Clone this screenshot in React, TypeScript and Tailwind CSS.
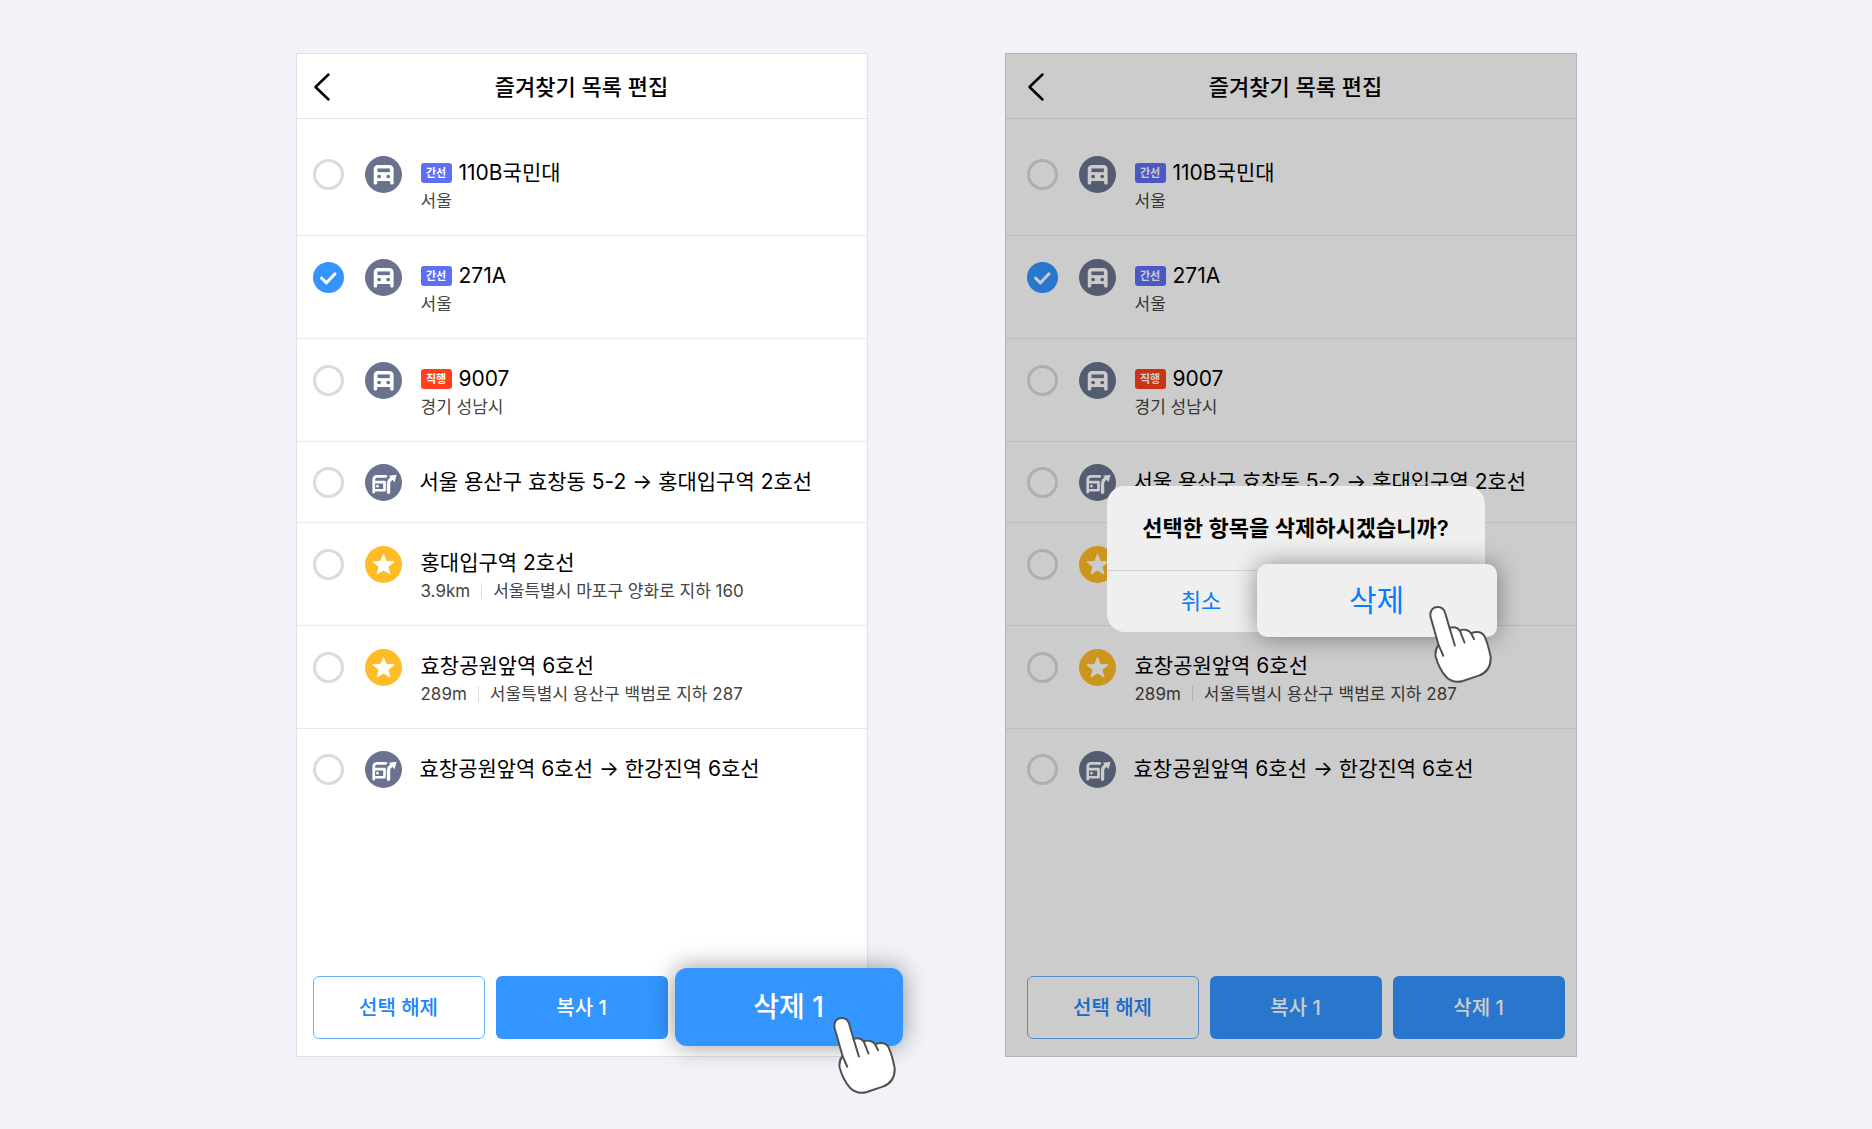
import { useState } from 'react';

type IconKind = 'bus' | 'route' | 'star';

interface Favorite {
  id: string;
  icon: IconKind;
  title: string;
  badge?: { label: string; express?: boolean };
  distance?: string;
  sub?: string;
}

const FAVORITES: Favorite[] = [
  { id: '110b',  icon: 'bus',   title: '110B국민대', badge: { label: '간선' }, sub: '서울' },
  { id: '271a',  icon: 'bus',   title: '271A',       badge: { label: '간선' }, sub: '서울' },
  { id: '9007',  icon: 'bus',   title: '9007',       badge: { label: '직행', express: true }, sub: '경기 성남시' },
  { id: 'rt-1',  icon: 'route', title: '서울 용산구 효창동 5-2 → 홍대입구역 2호선' },
  { id: 'hongik', icon: 'star', title: '홍대입구역 2호선', distance: '3.9km', sub: '서울특별시 마포구 양화로 지하 160' },
  { id: 'hyochang', icon: 'star', title: '효창공원앞역 6호선', distance: '289m', sub: '서울특별시 용산구 백범로 지하 287' },
  { id: 'rt-2',  icon: 'route', title: '효창공원앞역 6호선 → 한강진역 6호선' },
];

export default function App() {
  return (
    <main className="flex min-h-screen items-start justify-center gap-[137px] bg-[#f2f3f8] pt-[53px] pb-[72px] font-['Inter','Noto_Sans_CJK_KR',sans-serif] text-black">
      <Phone name="select" />
      <Phone name="confirm" confirming />
    </main>
  );
}

/* ─── Phone screen ─── */
function Phone({ name, confirming = false }: { name: string; confirming?: boolean }) {
  const [selected, setSelected] = useState<string[]>(['271a']);
  const inset = confirming ? 'pl-[21px] pr-[11px]' : 'px-4';

  const toggle = (id: string) =>
    setSelected(s => (s.includes(id) ? s.filter(v => v !== id) : [...s, id]));

  return (
    <section className="relative flex min-h-[1004px] w-full max-w-[572px] flex-col border border-[#dfe1e6] bg-white">
      <header className={`grid h-[65px] grid-cols-[24px_1fr_24px] items-center border-b border-[#e4e5e8] pt-0.5 ${inset}`}>
        <button type="button" aria-label="뒤로" className="flex h-8 w-6 items-center">
          <svg viewBox="0 0 18 30" className="h-[30px] w-[18px]" fill="none" stroke="black" strokeWidth="2.5" strokeLinecap="round" strokeLinejoin="round">
            <path d="M15.5 2.5 2.5 15l13 12.5" />
          </svg>
        </button>
        <h1 className="text-center text-[22px] leading-8 font-medium">즐겨찾기 목록 편집</h1>
      </header>

      <ul className="pt-3.5">
        {FAVORITES.map((item, i) => (
          <FavoriteRow
            key={item.id}
            item={item}
            inputId={`${name}-${item.id}`}
            inset={inset}
            last={i === FAVORITES.length - 1}
            checked={selected.includes(item.id)}
            onToggle={() => toggle(item.id)}
          />
        ))}
      </ul>

      {/* ── Bottom actions ── */}
      <div className={`mt-auto grid grid-cols-3 gap-[11px] pb-[17px] ${inset}`}>
        <button
          type="button"
          onClick={() => setSelected([])}
          className="h-[63px] rounded-md border border-[#6bb0fb] text-[20px] font-medium text-[#1a85fb]"
        >
          선택 해제
        </button>
        <button type="button" className="h-[63px] rounded-md bg-[#3395ff] text-[20px] font-medium text-white">
          복사 1
        </button>
        {confirming ? (
          <button type="button" className="h-[63px] rounded-md bg-[#3395ff] text-[20px] font-medium text-white">
            삭제 1
          </button>
        ) : (
          <div className="relative h-[63px]">
            <button
              type="button"
              className="absolute -top-2 -left-1 h-[78px] w-[228px] rounded-xl bg-[#3395ff] text-[28px] font-medium text-white shadow-[0_0_24px_rgba(0,0,0,0.42)]"
            >
              삭제 1
            </button>
            <Hand className="absolute top-[41px] left-[154px]" />
          </div>
        )}
      </div>

      {confirming && (
        <>
          <div className="absolute -inset-px bg-black/20" />
          <ConfirmDialog />
        </>
      )}
    </section>
  );
}

/* ─── List row ─── */
interface RowProps {
  item: Favorite;
  inputId: string;
  inset: string;
  last: boolean;
  checked: boolean;
  onToggle: () => void;
}

function FavoriteRow({ item, inputId, inset, last, checked, onToggle }: RowProps) {
  const single = item.icon === 'route';

  return (
    <li className={`flex ${single ? 'h-[81px] pt-[22px]' : 'h-[103px] pt-[23px]'} ${last ? '' : 'border-b border-[#e9eaec]'} ${inset}`}>
      <span className="relative mt-[3px] h-[31px] w-[31px] shrink-0">
        <input
          id={inputId}
          type="checkbox"
          checked={checked}
          onChange={onToggle}
          className="block h-[31px] w-[31px] appearance-none rounded-full border-[3px] border-[#dadae4] bg-transparent checked:border-0 checked:bg-[#3395ff]"
        />
        {checked && (
          <svg viewBox="0 0 31 31" className="pointer-events-none absolute inset-0" fill="none" stroke="white" strokeWidth="3" strokeLinecap="round" strokeLinejoin="round">
            <path d="m8.500 16 5 4.800 8.500-9" />
          </svg>
        )}
      </span>
      <span className="ml-[21px] h-[37px] w-[37px] shrink-0">
        <RowIcon kind={item.icon} />
      </span>
      <label htmlFor={inputId} className={`whitespace-nowrap ${single ? 'ml-[18px] pt-1' : 'ml-[19px] pt-[3px]'}`}>
        <span className="flex h-7 items-center text-[21px] leading-7">
          {item.badge && (
            <span className={`mr-[7px] flex h-5 w-[31px] items-center justify-center rounded-[3px] text-[11px] leading-5 font-bold text-white ${item.badge.express ? 'bg-[#ff401a]' : 'bg-[#5f6ff5]'}`}>
              {item.badge.label}
            </span>
          )}
          {item.title}
        </span>
        {item.sub && (
          <span className="flex h-7 items-center text-[17px] leading-7 text-[#444]">
            {item.distance && <span className="mr-[11px] border-r border-[#dcdce0] pr-[11px] leading-4">{item.distance}</span>}
            {item.sub}
          </span>
        )}
      </label>
    </li>
  );
}

function RowIcon({ kind }: { kind: IconKind }) {
  return (
    <svg viewBox="0 0 110 110" className="h-[37px] w-[37px]">
      <circle cx="55" cy="55" r="55" fill={kind === 'star' ? '#ffbc26' : '#69738f'} />
      {kind === 'bus' && (
        <>
          <path
            d="M38 27H72C80 27 85 32 85 39V82C85 86 75 86 75 82V76L71 74H39L36 76V82C36 86 26 86 26 82V39C26 32 31 27 38 27Z"
            fill="white"
          />
          <rect x="37" y="37" width="37" height="11" fill="#69738f" />
          <circle cx="42" cy="61" r="5.500" fill="#69738f" />
          <circle cx="69" cy="61" r="5.500" fill="#69738f" />
        </>
      )}
      {kind === 'route' && (
        <g fill="none" stroke="white" strokeWidth="8">
          <path d="M62 37H36q-10 0-10 10V84" strokeLinecap="round" />
          <path d="M26 54H58V78H30" strokeLinejoin="round" />
          <path d="M70 84V58q0-11 14-18" strokeWidth="10" strokeLinecap="round" />
          <circle cx="37" cy="66" r="4" fill="white" stroke="none" />
          <path d="M71 35 94 32 88 54Z" fill="white" stroke="none" />
        </g>
      )}
      {kind === 'star' && (
        <path
          d="M55 25 63 46 86 47 68 61 74 83 55 71 36 83 42 61 24 47 47 46Z"
          fill="white"
          stroke="white"
          strokeWidth="3"
          strokeLinejoin="round"
        />
      )}
    </svg>
  );
}

/* ─── Delete confirmation ─── */
function ConfirmDialog() {
  return (
    <div role="dialog" aria-labelledby="confirm-title" className="absolute top-[432px] left-[101px] w-[378px] rounded-[18px] bg-[#efefef]">
      <h2 id="confirm-title" className="border-b border-[#d2d2d2] pt-[26px] pb-[26px] text-center text-[22px] leading-8 font-semibold">
        선택한 항목을 삭제하시겠습니까?
      </h2>
      <div className="grid grid-cols-2">
        <button type="button" className="h-[61px] text-[22px] text-[#0a7aff]">취소</button>
        <div className="relative">
          <button
            type="button"
            className="absolute -top-[7px] -left-[39px] h-[73px] w-[240px] rounded-[10px] bg-[#efefef] text-[30px] text-[#0a7aff] shadow-[0_0_24px_rgba(0,0,0,0.42)]"
          >
            삭제
          </button>
          <Hand className="absolute top-[35px] left-[133px]" />
        </div>
      </div>
    </div>
  );
}

function Hand({ className }: { className: string }) {
  return (
    <svg
      viewBox="0 0 190 232"
      className={`pointer-events-none h-[77px] w-[63px] ${className}`}
      fill="none"
      stroke="#505050"
      strokeWidth="6"
      strokeLinecap="round"
      strokeLinejoin="round"
    >
      <path
        fill="white"
        d="M29 118 5 34C1 14 12 3 26 3 38 3 46 10 49 22L62 66C74 62 86 64 93 74 106 68 120 72 127 82 144 76 160 78 168 92 175 108 182 132 186 154 187 184 172 202 150 210L102 226C84 231 66 228 52 214 36 196 26 174 20 152 18 138 22 126 29 118Z"
      />
      <path d="M29 118 43 150M62 66 78 119M93 74 107 110M127 82 136 100" />
    </svg>
  );
}
